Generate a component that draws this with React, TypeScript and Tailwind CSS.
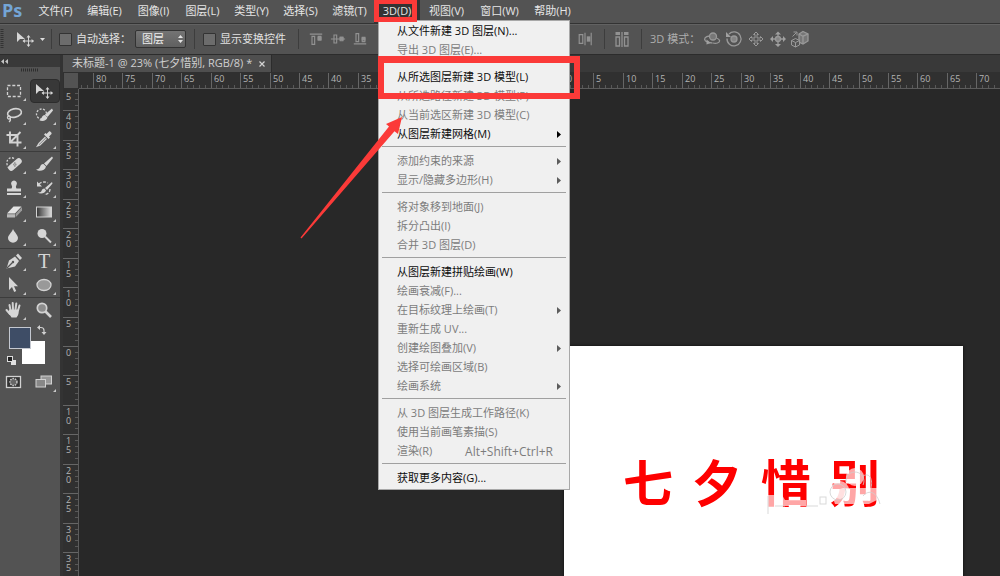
import type { ReactNode } from 'react'
import clsx from 'clsx'

interface MenuEntry {
  label: string
  enabled?: boolean
  submenu?: boolean
  shortcut?: string
}

// Each inner array is one block of the menu, blocks are split by a rule
const MENU_3D: MenuEntry[][] = [
  [{ label: '从文件新建 3D 图层(N)...', enabled: true }, { label: '导出 3D 图层(E)...' }],
  [
    { label: '从所选图层新建 3D 模型(L)', enabled: true },
    { label: '从所选路径新建 3D 模型(P)' },
    { label: '从当前选区新建 3D 模型(C)' },
    { label: '从图层新建网格(M)', enabled: true, submenu: true },
  ],
  [
    { label: '添加约束的来源', submenu: true },
    { label: '显示/隐藏多边形(H)', submenu: true },
  ],
  [{ label: '将对象移到地面(J)' }, { label: '拆分凸出(I)' }, { label: '合并 3D 图层(D)' }],
  [
    { label: '从图层新建拼贴绘画(W)', enabled: true },
    { label: '绘画衰减(F)...' },
    { label: '在目标纹理上绘画(T)', submenu: true },
    { label: '重新生成 UV...' },
    { label: '创建绘图叠加(V)', submenu: true },
    { label: '选择可绘画区域(B)' },
    { label: '绘画系统', submenu: true },
  ],
  [
    { label: '从 3D 图层生成工作路径(K)' },
    { label: '使用当前画笔素描(S)' },
    { label: '渲染(R)', shortcut: 'Alt+Shift+Ctrl+R' },
  ],
  [{ label: '获取更多内容(G)...', enabled: true }],
]

const MENUS_LEFT = ['文件(F)', '编辑(E)', '图像(I)', '图层(L)', '类型(Y)', '选择(S)', '滤镜(T)']
const MENUS_RIGHT = ['视图(V)', '窗口(W)', '帮助(H)']

function Icon({ size = 18, children, className }: { size?: number; children: ReactNode; className?: string }) {
  return (
    <svg width={size} height={size} viewBox="0 0 18 18" fill="none" stroke="#d2d2d2" strokeWidth="1.3" className={className} aria-hidden="true">
      {children}
    </svg>
  )
}

const F = '#d6d6d6'

const moveShape = (
  <>
    <path d="M1 2v10l3-3h5z" fill={F} stroke="none" />
    <path d="M12.500 6v10M7.500 11h10" strokeWidth="1" />
    <path d="M12.500 5l2 2.400h-4zM12.500 17l2-2.400h-4zM6.500 11l2.400-2v4zM18 11l-2.400-2v4z" fill={F} stroke="none" />
  </>
)

const TOOLS: { name: string; art: ReactNode; plain?: boolean }[][] = [
  [
    { name: '矩形选框工具', art: <rect x="2.5" y="3.500" width="13" height="11" strokeDasharray="3 1.800" /> },
    { name: '移动工具', art: moveShape, plain: true },
    {
      name: '套索工具',
      art: (
        <>
          <ellipse cx="9.500" cy="7" rx="7" ry="4.200" transform="rotate(-12 9.500 7)" strokeWidth="1.600" />
          <circle cx="4" cy="11.500" r="1.500" />
          <path d="M5 12c1 2 .5 3-1 4" />
        </>
      ),
    },
    {
      name: '快速选择工具',
      art: (
        <>
          <circle cx="6.500" cy="8" r="5" strokeDasharray="2 1.500" />
          <path d="M17 2.500l-7 6 2.500 2.500L18 4.500z" fill={F} stroke="none" />
          <path d="M10 9c-2 0-3 1.500-3.500 3-.5 1-1.500 1.800-2.500 2 3 2 7.500 1 8.500-2.500z" fill={F} stroke="none" />
        </>
      ),
    },
    { name: '裁剪工具', art: <path d="M5 1.500v11h11.500M1.500 5h11v11.500M5 12.500L15.500 2" strokeWidth="1.900" /> },
    {
      name: '吸管工具',
      art: (
        <>
          <path d="M10.500 7L4 13.500 2.500 16l2.500-1L11.500 8.500" />
          <path d="M9 4.500l4.500 4.500 1.500-1.500-1-1 2.500-2.500c.8-.8-1.700-3.300-2.500-2.500L11.500 4l-1-1z" fill={F} stroke="none" />
        </>
      ),
    },
  ],
  [
    {
      name: '污点修复画笔工具',
      art: (
        <>
          <path d="M9 3.500C5 1 1 5 2 9c.5 3 2 4.500 3 5" strokeDasharray="2 1.500" />
          <rect x="2" y="6.500" width="16" height="6" rx="3" transform="rotate(-42 10 9.500)" fill={F} stroke="none" />
          <path d="M8.500 9.500h.8M10.500 9.500h.8M9.500 8h.8M9.500 11h.8" stroke="#555" />
        </>
      ),
    },
    {
      name: '画笔工具',
      art: (
        <>
          <path d="M17 1.500l-8 7 2.500 2.500L18 3z" fill={F} stroke="none" />
          <path d="M8.500 9c-2.500 0-3 1.500-3.500 3-.5 1.500-2 2.500-4 2.500 3 2.500 9 1.500 10-3z" fill={F} stroke="none" />
        </>
      ),
    },
    {
      name: '仿制图章工具',
      art: (
        <path d="M9 1.500a3 3 0 0 1 2.500 4.500c-.8 1.300-.8 2 0 3.500H16v3H2v-3h4.500c.8-1.500.8-2.200 0-3.500A3 3 0 0 1 9 1.500zM2 14h14v2H2z" fill={F} stroke="none" />
      ),
    },
    {
      name: '历史记录画笔工具',
      art: (
        <>
          <path d="M4 5c3-2.500 6-2.500 9-1M15 10c0 4-3 5.500-6 5.500" strokeDasharray="3 1.500" />
          <path d="M2 2.500v5h5z" fill={F} stroke="none" />
          <path d="M17 3l-7 6 2 2 5.500-6.500zM9.500 9.500c-2 0-2.500 1-3 2.500-.5 1-2 1.500-4 1.500 3 2 7.500 1 8.500-2z" fill={F} stroke="none" />
        </>
      ),
    },
    {
      name: '橡皮擦工具',
      art: (
        <>
          <path d="M8.500 3.500h8l-6.500 7H2z" fill="#e4e4e4" stroke="none" />
          <path d="M2 11.200h8v3.300H2z" fill="#b8b8b8" stroke="none" />
          <path d="M10.600 11l6.400-7v3.500l-6.400 6.800z" fill="#9a9a9a" stroke="none" />
        </>
      ),
    },
    { name: '渐变工具', art: <rect x="1.500" y="4" width="15" height="10" fill="url(#toolGradient)" strokeWidth="1" /> },
    { name: '模糊工具', art: <path d="M8 2c2 4 5 6 5 9a5 4.700 0 0 1-10 0c0-3 3.500-5 5-9z" fill={F} stroke="none" /> },
    {
      name: '减淡工具',
      art: (
        <>
          <circle cx="7" cy="6.500" r="4.500" fill={F} stroke="none" />
          <path d="M10 9.500l6 6" strokeWidth="2" />
        </>
      ),
    },
  ],
  [
    {
      name: '钢笔工具',
      art: (
        <>
          <path d="M1.500 16.500L4 8.500l6-4 4 4.500-4 5.500z" fill={F} stroke="none" />
          <path d="M11 3.500l2-2 4 4.500-2 2z" fill={F} stroke="none" />
          <path d="M2 16l5.500-5.500" stroke="#535353" />
          <circle cx="8" cy="10" r="1.200" fill="#535353" stroke="none" />
        </>
      ),
    },
    { name: '横排文字工具', art: null },
    { name: '路径选择工具', art: <path d="M4 1v13l3-3 2.200 5 2-1-2.200-4.700H13z" fill={F} stroke="none" /> },
    { name: '椭圆工具', art: <ellipse cx="9" cy="9" rx="7" ry="5.500" fill="#999" /> },
  ],
  [
    {
      name: '抓手工具',
      art: (
        <>
          <path d="M5.500 9L4.500 4M8 8.500l-.3-6.500M10.500 8.500L11.300 2.500M13 9.500l1.500-5M5 13l-3.500-4" strokeWidth="2" strokeLinecap="round" />
          <path d="M4.500 8.500h9.300c0 4-.3 5.500-2.300 8h-5c-1-2-3-3.500-3.500-5.500z" fill={F} stroke="none" />
        </>
      ),
    },
    {
      name: '缩放工具',
      art: (
        <>
          <circle cx="7" cy="7" r="4.700" fill="#8c8c8c" strokeWidth="1.700" />
          <path d="M10.500 10.500l5.500 5.500" strokeWidth="2.600" />
        </>
      ),
      plain: true,
    },
  ],
]

function ToolButton({ name, art, plain }: { name: string; art: ReactNode; plain?: boolean }) {
  const active = name === '移动工具'
  return (
    <button
      type="button"
      aria-label={name}
      className={clsx(
        'relative flex h-6 w-[30px] items-center justify-center pr-0.5',
        active && 'rounded-sm border border-[#2c2c2c] bg-[#383838]',
      )}
    >
      {art ? (
        <Icon>{art}</Icon>
      ) : (
        <span className="[font-family:'Liberation_Serif',serif] text-xl leading-6 text-[#d6d6d6]">T</span>
      )}
      {!plain && (
        <svg width="3" height="3" viewBox="0 0 3 3" className="absolute bottom-0.5 right-1" aria-hidden="true">
          <path d="M3 0v3H0z" fill="#c8c8c8" />
        </svg>
      )}
    </button>
  )
}

function Toolbox() {
  return (
    <aside className="flex w-[63px] shrink-0 flex-col border-r-[3px] border-[#333] bg-[#535353]">
      <div className="flex h-3 items-center bg-[#393939] pl-px">
        <svg width="7" height="5" viewBox="0 0 7 5" aria-hidden="true">
          <path d="M3 0v5L0 2.500zM7 0v5L4 2.500z" fill="#c4c4c4" />
        </svg>
      </div>
      <div className="flex h-3 justify-center pt-px">
        <svg width="18" height="4" aria-hidden="true">
          <path d="M0 2h18" stroke="#2e2e2e" strokeWidth="3" strokeDasharray="1 1" />
        </svg>
      </div>
      {TOOLS.map((group, i) => (
        <div key={i} className={clsx('grid grid-cols-2', i > 0 && 'border-t border-[#3c3c3c]')}>
          {group.map((tool) => (
            <ToolButton key={tool.name} {...tool} />
          ))}
        </div>
      ))}

      {/* Foreground / background swatches */}
      <svg width="60" height="48" viewBox="0 0 60 48" aria-hidden="true">
        <rect x="22" y="19" width="23" height="23" fill="#fff" />
        <rect x="9.500" y="5.500" width="21" height="21" fill="#3e4d66" stroke="#c4c8d0" />
        <path d="M38.500 5.500h2.500a3 3 0 0 1 3 3v2" fill="none" stroke="#d0d0d0" strokeWidth="1.200" />
        <path d="M37 5.500l3-2.500v5zM44 13l-2.500-3h5z" fill="#d0d0d0" />
        <rect x="11" y="38" width="5" height="5" fill="#e0e0e0" />
        <rect x="7.500" y="34.500" width="5" height="5" fill="#222" stroke="#ddd" />
      </svg>

      <div className="grid grid-cols-2">
        <ToolButton
          name="快速蒙版"
          plain
          art={
            <>
              <rect x="1.500" y="3.500" width="14" height="11" fill="#333" />
              <circle cx="8.500" cy="9" r="3.500" fill="#666" strokeDasharray="1.500 1" />
            </>
          }
        />
        <ToolButton
          name="屏幕模式"
          art={
            <>
              <rect x="6" y="3" width="10.500" height="8" fill="#999" strokeWidth="1" />
              <rect x="1" y="6.500" width="9.500" height="7.500" fill="#888" strokeWidth="1" />
            </>
          }
        />
      </div>
    </aside>
  )
}

function Menu3D() {
  return (
    <div className="absolute left-1 top-full z-10 -mt-[3px] w-[192px] border border-[#a8a8a8] bg-[#f0f0f0] py-px">
      {MENU_3D.map((block, i) => (
        <div key={i}>
          {i > 0 && (
            <div className="mx-[3px] flex h-2 items-center pb-1">
              <hr className="w-full border-[#a0a0a0]" />
            </div>
          )}
          {block.map(({ label, enabled, submenu, shortcut }) => (
            <button
              key={label}
              type="button"
              disabled={!enabled}
              className={clsx(
                'flex h-[19px] w-full items-center justify-between whitespace-nowrap pl-[18px] text-[11px]',
                enabled ? 'text-[#0c0c0c]' : 'text-[#7c7c7c]',
                shortcut ? 'pr-4' : 'pr-2',
              )}
            >
              <span>{label}</span>
              {shortcut && <span className="text-xs">{shortcut}</span>}
              {submenu && (
                <svg width="4" height="7" viewBox="0 0 4 7" aria-hidden="true">
                  <path d="M0 0l4 3.500L0 7z" fill={enabled ? '#000' : '#5c5c5c'} />
                </svg>
              )}
            </button>
          ))}
        </div>
      ))}
    </div>
  )
}

function MenuBar() {
  const item = 'whitespace-nowrap text-[11px] text-[#e6e6e6]'
  return (
    <nav className="flex h-[23px] shrink-0 items-stretch bg-[#535353]">
      <span className="w-[31px] pl-0.5 text-lg font-bold leading-5 text-[#74a5d6]">Ps</span>
      {MENUS_LEFT.map((label) => (
        <button key={label} type="button" className={clsx(item, 'w-[49px]')}>
          {label}
        </button>
      ))}
      <div className="relative flex">
        <button type="button" className={clsx(item, 'w-[46px] bg-[#333]')}>
          3D(D)
        </button>
        <Menu3D />
        <Annotations />
      </div>
      {MENUS_RIGHT.map((label) => (
        <button key={label} type="button" className={clsx(item, 'w-[53px]')}>
          {label}
        </button>
      ))}
    </nav>
  )
}

// Red marker boxes and the arrow that sit on top of the open menu
function Annotations() {
  return (
    <div className="pointer-events-none">
      <div className="absolute left-0 top-0 z-20 h-[22px] w-[43px] border-[5px] border-t-4 border-[#fb3a38]" />
      <div className="absolute left-1 top-14 z-20 h-[43px] w-[202px] border-[6px] border-t-[7px] border-[#fb3a38]" />
      <svg width="104" height="124" viewBox="0 0 104 124" className="absolute -left-[74px] top-[116px] z-20" aria-hidden="true">
        <path d="M0.500 121.500L89 10.500l-3-2.500L102 1l-4 17-3.500-2.700L1.500 122.500z" fill="#fb3a38" />
      </svg>
    </div>
  )
}

const ALIGN_ICONS = [
  <path d="M2 3.500h14M4.500 6h3v9h-3zM11.500 6h3v4h-3z" />,
  <path d="M1 9h16M4.500 4.500h3v9h-3zM11.500 7h3v4h-3z" />,
  <path d="M2 14.500h14M4.500 3h3v9h-3zM11.500 8h3v4h-3z" />,
]

function Divider() {
  return <div className="h-5 w-px shrink-0 bg-[#3d3d3d]" />
}

function OptionsBar() {
  const box = 'size-[13px] shrink-0 appearance-none rounded-[1px] border border-[#333] bg-[#6c6c6c]'
  return (
    <div className="flex h-[31px] shrink-0 items-center whitespace-nowrap border-t border-[#333] bg-[#535353] text-[11px] text-[#e2e2e2] shadow-[inset_0_1px_0_#626262]">
      <svg width="4" height="20" className="shrink-0" aria-hidden="true">
        <path d="M2 0v20" stroke="#333" strokeWidth="3" strokeDasharray="1 1" />
      </svg>
      <button type="button" aria-label="工具预设" className="flex w-[47px] shrink-0 items-center gap-1.5 pl-3">
        <Icon>{moveShape}</Icon>
        <svg width="5" height="3" viewBox="0 0 5 3" aria-hidden="true">
          <path d="M0 0h5L2.500 3z" fill="#ddd" />
        </svg>
      </button>
      <Divider />
      <label className="ml-[7px] flex items-center gap-1">
        <input type="checkbox" className={box} />
        自动选择：
      </label>
      <div className="relative ml-1 shrink-0">
        <select aria-label="自动选择目标" className="h-[18px] w-[51px] appearance-none rounded-[2px] border border-[#333] bg-linear-to-b from-[#747474] to-[#606060] pl-1.5 text-[11px] leading-4 text-[#eee]">
          <option>图层</option>
        </select>
        <svg width="5" height="8" viewBox="0 0 5 8" className="pointer-events-none absolute right-[3px] top-[5px]" aria-hidden="true">
          <path d="M0 3h5L2.500 0zM0 5h5L2.500 8z" fill="#e4e4e4" />
        </svg>
      </div>
      <div className="ml-2 flex">
        <Divider />
      </div>
      <label className="ml-2 flex items-center gap-1">
        <input type="checkbox" className={box} />
        显示变换控件
      </label>
      <div className="ml-3 mr-1.5 flex">
        <Divider />
      </div>
      <div className="flex shrink-0 gap-[9px]">
        {[0, 1, 2, 3].map((group) => (
          <div key={group} className="flex">
            {ALIGN_ICONS.map((art, i) => (
              <button key={i} type="button" aria-label="对齐" className="flex w-[22px] justify-center">
                <Icon size={16} className="stroke-[#929292]">
                  {group === 3 && i === 2 ? (
                    <>
                      <path d="M2.500 4h4v10h-4zM9 2v14M16 2v14" />
                      <path d="M11 6h4v6h-4z" fill="#929292" stroke="none" />
                    </>
                  ) : (
                    <>
                      {art}
                      <path d="M11.500 7h3v3h-3z" fill="#929292" />
                    </>
                  )}
                </Icon>
              </button>
            ))}
          </div>
        ))}
      </div>
      <div className="ml-2 mr-2 flex">
        <Divider />
      </div>
      <button type="button" aria-label="自动对齐图层" className="flex shrink-0">
        <Icon className="stroke-[#929292]">
          <path d="M3 7h3.500v9H3zM11.500 7H15v9h-3.500zM9 2v15" />
          <path d="M2.500 2h4.500v3H2.500zM11 2h4.500v3H11z" fill="#929292" stroke="none" />
        </Icon>
      </button>
      <div className="ml-2.5 mr-2 flex">
        <Divider />
      </div>
      <span className="text-[#adadad]">3D 模式：</span>
      <div className="ml-px flex shrink-0">
        {[
          <>
            <circle cx="10" cy="6.500" r="3.500" fill="#777" />
            <path d="M6.500 6C2 6.500.500 9 2.500 11c2 1.500 5 2 7 2M13.500 8c4 1.500 4 4 1 5-1.500.500-3 .500-4.500 0" />
            <path d="M3.500 9.500v5l4.500-1.500z" fill="#a0a0a0" stroke="none" />
          </>,
          <>
            <path d="M4 4a7 7 0 1 1-2 4.500" />
            <circle cx="9" cy="9" r="3" fill="#858585" />
            <path d="M1 2v5h5z" fill="#a0a0a0" stroke="none" />
          </>,
          <path d="M8 8V4.500H6.500L9 2l2.500 2.500H10V8h3.500V6.500L16 9l-2.500 2.500V10H10v3.500h1.500L9 16l-2.500-2.500H8V10H4.500v1.500L2 9l2.500-2.500V8z" strokeWidth="1" />,
          <>
            <circle cx="9" cy="9" r="2.500" fill="#858585" />
            <path d="M9 3.500v3M9 12v3M2 9h4M12 9h4" />
            <path d="M9 1.500l3 3H6zM9 17l3-3H6zM1 9l3-3v6zM17 9l-3-3v6z" fill="#a0a0a0" stroke="none" />
          </>,
          <>
            <path d="M12 1.500l5 2.500v7l-5 3-4-2V4z" fill="#777" />
            <path d="M8 4l4 2.200L17 4M12 6v8" />
            <path d="M4.500 8.500l4 2V15l-4 2-4-2v-4.500zM.5 10.500l4 2 4-2M4.500 12.500V17" fill="#555" strokeWidth="1" />
            <path d="M1.500 6.500l4-4M2.500 2h3.500v3.500" strokeWidth="1" />
          </>,
        ].map((art, i) => (
          <button key={i} type="button" aria-label="3D 模式" className="flex w-[22px] justify-center">
            <Icon className="stroke-[#999]">{art}</Icon>
          </button>
        ))}
      </div>
    </div>
  )
}

const UNIT = 5.89 // px per ruler centimetre at 23%

// Every whole centimetre between the start of a ruler and the window edge
function marks(zero: number, length: number) {
  const first = Math.ceil(-zero / UNIT)
  const last = Math.floor((length - zero) / UNIT)
  return Array.from({ length: last - first + 1 }, (_, i) => ({
    value: Math.abs(first + i),
    major: (first + i) % 5 === 0,
    pos: Math.round(zero + (first + i) * UNIT),
  }))
}

function HorizontalRuler() {
  return (
    <svg height="17" className="block min-w-0 flex-1 bg-[#303030]" aria-hidden="true">
      {marks(485, window.innerWidth - 79).map(({ value, major, pos }) => (
        <g key={pos}>
          <path d={`M${pos + 0.5} ${major ? 1 : 13}V16`} stroke={major ? '#666' : '#585858'} />
          {major && (
            <text x={pos + 3} y="10" fontSize="9" fill="#b4b4b4">
              {value}
            </text>
          )}
        </g>
      ))}
      <path d="M0 16.500h4000" stroke="#5c5c5c" />
    </svg>
  )
}

function VerticalRuler() {
  return (
    <svg width="16" className="block h-full shrink-0 bg-[#303030]" aria-hidden="true">
      {marks(257, window.innerHeight - 89).map(({ value, major, pos }) => (
        <g key={pos}>
          <path d={`M${major ? 0 : 12} ${pos + 0.5}H15`} stroke={major ? '#666' : '#585858'} />
          {major &&
            String(value)
              .split('')
              .map((digit, i) => (
                <text key={i} x="3" y={pos + 10 + i * 9} fontSize="9" fill="#b4b4b4">
                  {digit}
                </text>
              ))}
        </g>
      ))}
      <text x="3" y="11" fontSize="9" fill="#b4b4b4">
        5
      </text>
      <path d="M15.500 0v4000" stroke="#5c5c5c" />
    </svg>
  )
}

function Artboard() {
  return (
    <div className="absolute left-[485px] top-[257px] h-[399px] w-[399px] bg-white shadow-[0_0_3px_rgba(0,0,0,0.7)]">
      <div className="relative ml-[59px] mt-[102px] flex w-max gap-[19px] text-[50px] font-bold leading-[70px] text-[#fe0000]">
        {['七', '夕', '惜', '别'].map((char) => (
          <span key={char}>{char}</span>
        ))}
        {/* Faded stamp over the last two characters */}
        <svg width="120" height="50" viewBox="0 0 120 50" className="absolute left-[140px] top-[20px]" aria-hidden="true">
          <g fill="#fff" fillOpacity="0.65">
            <path d="M5 27h14l3 5h21v6H12l-7 8z" />
            <circle cx="77" cy="22" r="9" />
            <circle cx="92" cy="9" r="9" />
            <path d="M68 24l12-4h34v12l-8 4H72z" />
          </g>
          <g fill="none" stroke="#d0d0d0" strokeOpacity="0.8">
            <path d="M5 28v18M12 38h10M43 38h12" />
            <rect x="57" y="29" width="6" height="7" />
            <circle cx="75" cy="24" r="8" />
            <path d="M83 14a9 9 0 1 1 17 3M100 8c7-4 10 4 8 12M100 28c6-7 14-4 17 8" />
          </g>
        </svg>
      </div>
    </div>
  )
}

export default function App() {
  return (
    <div className="flex h-screen flex-col overflow-hidden bg-[#282828] [font-family:'Open_Sans','Noto_Sans_CJK_SC',sans-serif]">
      <svg width="0" height="0" className="absolute" aria-hidden="true">
        <linearGradient id="toolGradient">
          <stop offset="0" stopColor="#333" />
          <stop offset="1" stopColor="#ddd" />
        </linearGradient>
      </svg>
      <MenuBar />
      <OptionsBar />
      <div className="flex min-h-0 flex-1 border-t border-[#2c2c2c]">
        <Toolbox />
        <main className="flex min-w-0 flex-1 flex-col">
          <div className="flex h-[17px] shrink-0 bg-[#393939]">
            <div className="flex w-[209px] items-center justify-between whitespace-nowrap border-r border-[#2c2c2c] bg-[#4f4f4f] pl-[9px] pr-1.5 text-[11px] text-[#cfcfcf]">
              <span>未标题-1 @ 23% (七夕惜别, RGB/8) *</span>
              <button type="button" aria-label="关闭">
                <svg width="6" height="6" viewBox="0 0 6 6" aria-hidden="true">
                  <path d="M.5.5l5 5M5.500.5l-5 5" stroke="#d4d4d4" strokeWidth="1.200" />
                </svg>
              </button>
            </div>
          </div>
          <div className="flex h-[17px] shrink-0">
            <div className="w-4 shrink-0 border border-[#303030] bg-[#535353]" />
            <HorizontalRuler />
          </div>
          <div className="flex min-h-0 flex-1">
            <VerticalRuler />
            <div className="relative min-w-0 flex-1 overflow-hidden">
              <Artboard />
            </div>
          </div>
        </main>
      </div>
    </div>
  )
}
